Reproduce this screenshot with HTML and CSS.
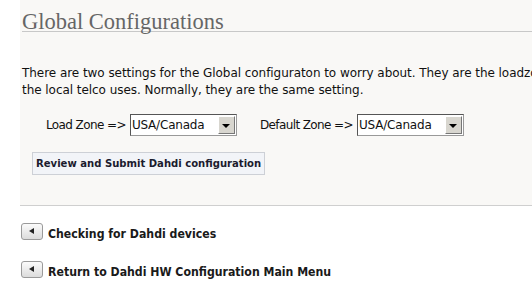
FILE: index.html
```html
<!DOCTYPE html>
<html lang="en">
<head>
  <meta charset="UTF-8" />
  <title>Global Configurations</title>
  <link rel="stylesheet" href="styles.css">
</head>
<body>
  <div class="panel">
    <h2 class="title">Global Configurations</h2>
    <p class="intro">There are two settings for the Global configuraton to worry about. They are the loadzone and the defaultzone. The loadzone is what<br>the local telco uses. Normally, they are the same setting.</p>

    <div class="zones">
      <label class="zone">Load Zone =&gt;
        <span class="select"><span class="value">USA/Canada</span><span class="arrow"></span></span>
      </label>
      <label class="zone">Default Zone =&gt;
        <span class="select"><span class="value">USA/Canada</span><span class="arrow"></span></span>
      </label>
    </div>

    <button class="submit">Review and Submit Dahdi configuration</button>
  </div>

  <div class="nav">
    <a class="nav-link" href="#"><span class="back"></span>Checking for Dahdi devices</a>
    <a class="nav-link" href="#"><span class="back"></span>Return to Dahdi HW Configuration Main Menu</a>
  </div>
</body>
</html>
```

FILE: styles.css
```css
body {
  margin: 0;
  background: #fff;
  font-family: "DejaVu Sans", sans-serif;
  font-size: 12px;
  color: #111;
  overflow: hidden;
  width: 532px;
}

.panel {
  margin-left: 20px;
  background: #f9f8f6;
  border-bottom: 1px solid #cfcfcf;
  padding: 0 0 29px 2px;
  height: 176px;
  overflow: hidden;
}

.title {
  margin: 0;
  padding-top: 12px;
  font-family: Georgia, "Liberation Serif", serif;
  font-weight: normal;
  font-size: 22.5px;
  line-height: 19px;
  color: #666;
  border-bottom: 1px solid #c8c8c8;
  white-space: nowrap;
}

.intro {
  margin: 33px 0 0;
  line-height: 17px;
  letter-spacing: -0.05px;
  white-space: nowrap;
}

.zones {
  display: flex;
  gap: 23px;
  margin: 15px 0 0 24px;
  letter-spacing: -0.6px;
}

.zone {
  display: flex;
  align-items: center;
  gap: 4px;
}

.select {
  display: flex;
  width: 107px;
  height: 22px;
  box-sizing: border-box;
  border: 1px solid #555;
  border-right-color: #999;
  border-bottom-color: #999;
  background: #fff;
  letter-spacing: -0.2px;
}

.value {
  flex: 1;
  padding: 3px 0 0 1px;
}

.arrow {
  width: 15px;
  margin: 1px;
  background: #d8d6cf;
  border: 1px solid;
  border-color: #fff #777 #777 #fff;
  position: relative;
}

.arrow::after {
  content: "";
  position: absolute;
  left: 3px;
  top: 7px;
  border: 4px solid transparent;
  border-top: 4px solid #000;
  border-bottom: 0;
}

.submit {
  display: block;
  margin: 16px 0 0 10px;
  padding: 4px 3px 4px;
  font-family: "DejaVu Sans Condensed", "DejaVu Sans", sans-serif;
  font-size: 11.2px;
  font-weight: bold;
  color: #1b1b2e;
  background: #f2f4f8;
  border: 1px solid #cdd0d6;
}

.nav {
  display: flex;
  flex-direction: column;
  gap: 20px;
  padding: 17px 0 0 21px;
}

.nav-link {
  display: flex;
  align-items: flex-end;
  gap: 5px;
  font-family: "DejaVu Sans Condensed", "DejaVu Sans", sans-serif;
  font-size: 12.2px;
  font-weight: bold;
  color: #1a1a1a;
  text-decoration: none;
}

.back {
  width: 22px;
  height: 17px;
  box-sizing: border-box;
  border: 1px solid #9a9a9a;
  border-radius: 3px;
  background: linear-gradient(#fbfbfb, #dcdcdc);
  position: relative;
  margin-bottom: 1px;
}

.back::after {
  content: "";
  position: absolute;
  left: 7px;
  top: 4px;
  border: 3.5px solid transparent;
  border-right: 5px solid #222;
  border-left: 0;
}
```
